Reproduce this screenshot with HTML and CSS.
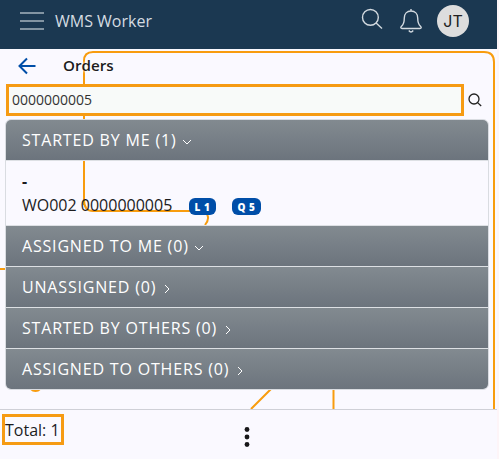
FILE: index.html
```html
<!DOCTYPE html>
<html lang="en">
<head>
<meta charset="utf-8">
<title>WMS Worker</title>
<link rel="stylesheet" href="styles.css">
</head>
<body>
<div class="app">
  <svg class="backdrop" width="497" height="459" viewBox="0 0 497 459" fill="none" stroke="#f89c0e" stroke-width="2">
    <path d="M84 205V61Q84 52 93 52H484Q494 52 494 62V409"/>
    <path d="M84 200Q84 211 93 211H203Q212 216 205 225M0 269H8M271 389L251 409M333.5 388V409"/>
    <circle cx="35.500" cy="384.500" r="6.500" fill="#f89c0e"/>
  </svg>
  <header class="topbar">
    <svg class="menu" width="24" height="20" viewBox="0 0 24 20" stroke="#a5b2bd" stroke-width="1.6"><path d="M0 2H24M0 10H24M0 18H24"/></svg>
    <span class="brand">WMS Worker</span>
    <svg class="find" width="22" height="22" viewBox="0 0 22 22" fill="none" stroke="#d3dae0" stroke-width="1.4"><circle cx="9.4" cy="9.4" r="7.9"/><path d="M15.1 15.1L21 20.5"/></svg>
    <svg class="bell" width="22" height="26" viewBox="0 0 22 26" fill="none" stroke="#d3dae0" stroke-width="1.4" stroke-linejoin="round"><path d="M11 1V3M4.3 10C4.3 5.8 7 3 11 3S17.700 5.800 17.700 10C17.700 15 18.500 16.500 20.500 18.300C21.700 19.500 21.200 20.500 20 20.500H2C.8 20.500 .3 19.500 1.500 18.300C3.500 16.500 4.300 15 4.300 10ZM8.800 22.500Q11 25.500 13.200 22.500"/></svg>
    <span class="avatar">JT</span>
  </header>
  <div class="titlebar">
    <svg class="back" width="18" height="18" viewBox="0 0 18 18" fill="none" stroke="#004ea8" stroke-width="2"><path d="M17.500 9H2M9 1.500L1.500 9L9 16.500"/></svg>
    <h1>Orders</h1>
  </div>
  <div class="search">
    <input class="query" type="text" value="0000000005" aria-label="Search">
    <svg class="go" width="14" height="14" viewBox="0 0 14 14" fill="none" stroke="#222" stroke-width="1.3"><circle cx="6" cy="6" r="5"/><path d="M9.600 9.600L13.200 13"/></svg>
  </div>
  <main class="groups">
    <h2>STARTED BY ME (1)<svg class="chev" viewBox="0 0 8 8"><path d="M0 2.500L4 6.500L8 2.500"/></svg></h2>
    <div class="order">
      <b>-</b>
      <div class="line"><span class="number">WO002 0000000005</span><span class="badge">L 1</span><span class="badge wide">Q 5</span></div>
    </div>
    <h2>ASSIGNED TO ME (0)<svg class="chev" viewBox="0 0 8 8"><path d="M0 2.500L4 6.500L8 2.500"/></svg></h2>
    <h2>UNASSIGNED (0)<svg class="chev right" viewBox="0 0 8 8"><path d="M2 .5L6 4.500L2 8.500"/></svg></h2>
    <h2>STARTED BY OTHERS (0)<svg class="chev right" viewBox="0 0 8 8"><path d="M2 .5L6 4.500L2 8.500"/></svg></h2>
    <h2>ASSIGNED TO OTHERS (0)<svg class="chev right" viewBox="0 0 8 8"><path d="M2 .5L6 4.500L2 8.500"/></svg></h2>
  </main>
  <footer class="footer">
    <span class="total">Total: 1</span>
    <svg class="more" width="6" height="20" viewBox="0 0 6 20" fill="#171719"><circle cx="3" cy="2.500" r="2.400"/><circle cx="3" cy="10" r="2.400"/><circle cx="3" cy="17.500" r="2.400"/></svg>
  </footer>
</div>
</body>
</html>
```
FILE: styles.css
```css
* { box-sizing: border-box; }
body {
  margin: 0;
  background: #fdf5f8;
  color: #1c1c1e;
  font: 16px/24px "Open Sans", "Noto Sans", sans-serif;
}
.app {
  position: relative;
  isolation: isolate;
  display: flex;
  flex-direction: column;
  width: 497px;
  height: 459px;
  background: #faf9ff;
  overflow: hidden;
}
.backdrop { position: absolute; inset: 0; z-index: -1; }
svg { display: block; flex: none; }
.topbar {
  display: flex;
  align-items: center;
  height: 49px;
  padding: 0 28px 7px 20px;
  background: #1b3851;
  color: #d5dce2;
}
.brand { margin-left: 11px; }
.find { margin-left: auto; margin-right: 16.5px; margin-top: -4px; }
.bell { margin-right: 15.5px; }
.avatar {
  width: 32px;
  height: 32px;
  border-radius: 50%;
  background: #ddd;
  color: #222;
  font: 16px/33px Inter, sans-serif;
  text-align: center;
}
.titlebar { display: flex; align-items: center; height: 35px; padding: 0 18px 2px; }
h1 { margin: 0 0 1px 27px; font-size: 15.2px; line-height: 20px; font-weight: 650; text-shadow: 0 0 3px #fff, 0 0 3px #fff; }
.search { display: flex; align-items: center; height: 32px; padding-left: 6px; }
.query {
  width: 458px;
  height: 32px;
  padding: 0 0 1px 3px;
  border: 3px solid #f69b13;
  background: #f8faf9;
  color: #333;
  font: 14px "Open Sans", sans-serif;
}
.go { margin-left: 4px; }
.groups { width: 484px; margin: 3px 0 0 5px; border: 1px solid #d9dce1; border-radius: 6px; overflow: hidden; }
h2 {
  display: flex;
  align-items: center;
  height: 41px;
  margin: 0;
  padding: 0 16px;
  border-bottom: 1px solid #dde0e4;
  background: linear-gradient(#828a90, #6c747d);
  color: #fff;
  font-size: 16px;
  font-weight: 500;
  letter-spacing: .82px;
}
h2:last-child { height: 40px; border-bottom: 0; }
.chev { width: 8px; height: 9px; margin: 3px 0 0 6.5px; overflow: visible; fill: none; stroke: #fff; stroke-width: 1; }
.right { margin-left: 7px; }
.order { height: 65px; padding: 8px 16px 0; border-bottom: 1px solid #dde0e4; }
.order b { display: block; }
.line { display: flex; align-items: center; height: 24px; }
.number { width: 167px; }
.badge {
  width: 27px;
  height: 17px;
  margin: 2px 16px 0 0;
  border-radius: 6px;
  background: #004ea8;
  color: #fff;
  font-size: 10px;
  line-height: 18px;
  font-weight: 800;
  letter-spacing: .5px;
  text-align: center;
  white-space: nowrap;
}
.wide { width: 29px; }
.footer {
  display: grid;
  grid-template-columns: 244px 1fr;
  height: 50px;
  margin-top: auto;
  border-top: 1px solid #cfd0d7;
  background: #faf9ff;
}
.total { width: 62px; height: 31px; margin: 4px 0 0 2px; border: 3px solid #f69b13; line-height: 26px; white-space: nowrap; }
.more { margin-top: 17px; }
```
